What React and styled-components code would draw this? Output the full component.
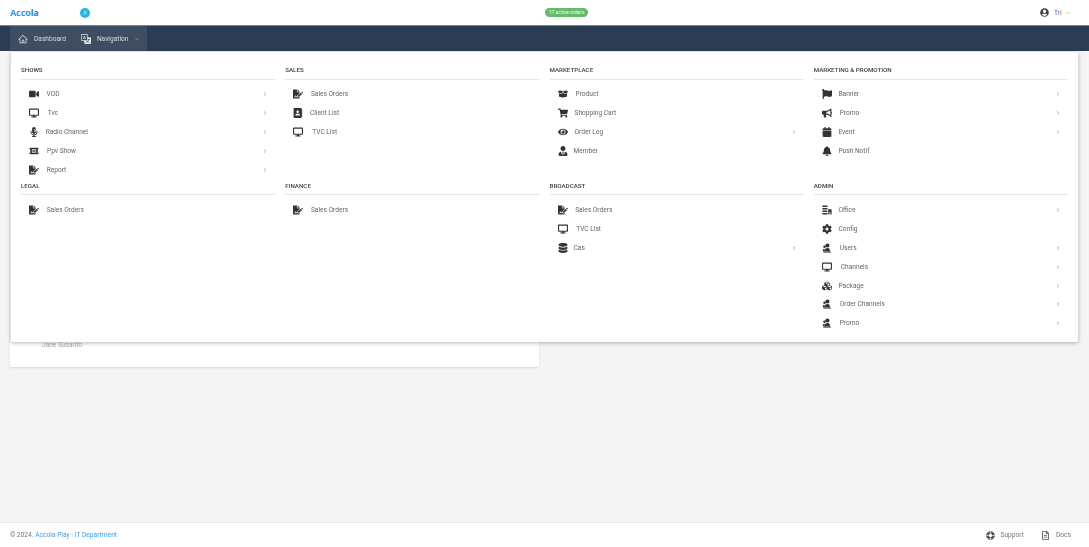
import React from "react";
import styled, { createGlobalStyle } from "styled-components";
import {
  FaVideo, FaDesktop, FaMicrophoneAlt, FaFileSignature, FaAddressBook,
  FaBoxOpen, FaShoppingCart, FaEye, FaUserTie, FaFlag, FaBullhorn, FaCalendar,
  FaBell, FaCog, FaCubes, FaDatabase, FaUserCircle, FaLifeRing, FaRegFileAlt,
} from "react-icons/fa";
import { AiOutlineHome } from "react-icons/ai";
import { BsTranslate } from "react-icons/bs";
import { FiChevronRight, FiChevronDown } from "react-icons/fi";

const GlobalStyle = createGlobalStyle`
  html, body { margin: 0; padding: 0; }
  body { font-family: Roboto, "Liberation Sans", sans-serif; background: #f4f4f4; }
`;

const Page = styled.div`
  min-height: 100vh;
  display: flex;
  flex-direction: column;
  will-change: opacity;
`;

const Header = styled.header`
  height: 25px;
  background: #fff;
  display: grid;
  grid-template-columns: 535px auto 1fr;
  align-items: center;
  padding-left: 10px;
  padding-right: 18px;
`;
const Brand = styled.div`
  display: flex;
  align-items: center;
`;
const Logo = styled.div`
  width: 70px;
  font-family: "Open Sans", sans-serif;
  font-size: 9px;
  font-weight: 700;
  color: #2f97df;
  line-height: 11px;
  letter-spacing: -0.1px;
  span { color: #1f86b0; }
`;
const RoundBadge = styled.div`
  width: 10px;
  height: 10px;
  border-radius: 50%;
  background: #29b6e0;
  color: #cdeef8;
  font-size: 5px;
  display: flex;
  align-items: center;
  justify-content: center;
`;
const OrdersPill = styled.div`
  width: 43px;
  height: 9px;
  border-radius: 5px;
  background: #66bb6a;
  color: #eefaef;
  font-size: 5px;
  line-height: 9px;
  text-align: center;
  white-space: nowrap;
`;
const UserBox = styled.div`
  justify-self: end;
  display: flex;
  align-items: center;
  color: #666;
  font-size: 6.5px;
  svg:first-child { font-size: 9px; color: #444; margin-right: 5.5px; }
  svg:last-child { font-size: 6px; color: #888; margin-left: 3.5px; }
`;

const NavWrap = styled.div`
  position: relative;
  z-index: 2;
`;
const NavBar = styled.nav`
  height: 25px;
  border-top: 1px solid #76828f;
  background: #2b3c53;
  padding-left: 10px;
  display: flex;
`;
const NavGroup = styled.div`
  background: #3e4d62;
  width: 137px;
  display: flex;
  align-items: center;
  padding-left: 8px;
  box-sizing: border-box;
`;
const NavLink = styled.div`
  display: flex;
  align-items: center;
  gap: 6px;
  color: #d8dce1;
  font-size: 6.6px;
  margin-right: ${(p) => p.$after || 0}px;
  svg { font-size: 10px; color: #e4e7ea; }
`;
const NavCaret = styled(FiChevronDown)`
  && { font-size: 6px; color: #aab2bc; }
`;

const MegaMenu = styled.div`
  position: absolute;
  top: 27px;
  left: 11px;
  width: 1067px;
  box-sizing: border-box;
  background: #fff;
  border-radius: 2px;
  box-shadow: 0 1px 4px rgba(0, 0, 0, 0.3);
  padding: 13px 10px 9.4px;
  display: grid;
  grid-template-columns: repeat(4, 1fr);
  column-gap: 10px;
  row-gap: 2px;
`;
const Section = styled.section`
  min-width: 0;
`;
const SectionTitle = styled.h4`
  margin: 0;
  height: 13.5px;
  line-height: 10px;
  font-size: 6.2px;
  font-weight: 500;
  color: #3a3f45;
  text-transform: uppercase;
  border-bottom: 1px solid #e6e6e6;
`;
const ItemList = styled.ul`
  list-style: none;
  margin: 5.5px 0 0;
  padding: 0;
`;
const Item = styled.li`
  height: 18.8px;
  display: flex;
  align-items: center;
  padding: 0 7px 0 8px;
  font-size: 6.6px;
  color: #666;
`;
const IconSlot = styled.span`
  width: ${(p) => p.$w}px;
  margin-right: 7px;
  display: flex;
  align-items: center;
  flex: none;
  color: #333;
  font-size: 10px;
  svg { flex: none; }
`;
const ItemLabel = styled.span`
  flex: 1;
`;
const ItemArrow = styled(FiChevronRight)`
  font-size: 6px;
  color: #666;
`;

const Main = styled.main`
  flex: 1;
  padding: 10px;
`;
const Card = styled.div`
  width: 529px;
  height: 306px;
  box-sizing: border-box;
  background: #fff;
  border-radius: 2px;
  box-shadow: 0 1px 2px rgba(0, 0, 0, 0.12);
  padding: 0 0 18px 32px;
  display: flex;
  align-items: flex-end;
  color: #aaa;
  font-size: 6.6px;
`;

const Footer = styled.footer`
  height: 25px;
  box-sizing: border-box;
  background: #fff;
  border-top: 1px solid #e6e6e6;
  display: flex;
  align-items: center;
  justify-content: space-between;
  padding: 0 18px 0 10px;
  font-size: 6.65px;
  color: #777;
`;
const Copy = styled.div`
  a { color: #3f9fe0; text-decoration: none; }
`;
const FooterLinks = styled.div`
  display: flex;
  gap: 17px;
`;
const FooterLink = styled.div`
  display: flex;
  align-items: center;
  gap: 6px;
  svg { font-size: 9px; color: #555; }
`;
const SupportIcon = styled(FaLifeRing)`
  transform: rotate(45deg);
`;

// no package icon looks like these three, so they are drawn
const PpvIcon = () => (
  <svg width="1em" height="1em" viewBox="0 0 24 24" fill="currentColor">
    <path d="M1 5h3v3H1zM1 16h3v3H1zM20 5h3v3h-3zM20 16h3v3h-3z" />
    <path fillRule="evenodd" d="M3 4h18v16H3zM7 8v8h10V8z" />
    <path d="M8 9h8v6H8z" opacity="0.7" />
  </svg>
);
const OfficeIcon = () => (
  <svg width="1em" height="1em" viewBox="0 0 24 24" fill="currentColor">
    <path d="M1 1h12v4H1zM1 7h12v4H1zM1 13h12v4H1zM1 19h12v4H1z" />
    <path d="M15 10h8v13h-3v-6h-2v6h-3z" />
  </svg>
);
const StaffIcon = () => (
  <svg width="1em" height="1em" viewBox="0 0 24 24" fill="currentColor">
    <circle cx="13" cy="6" r="5" />
    <path d="M7 19c0-4 1-7 6-7s6 3 6 7z" />
    <circle cx="6" cy="9" r="3" />
    <path d="M2 19c0-3 1-5 4-5l1 5z" />
    <path d="M3 20h18v3H3z" />
  </svg>
);

const menu = [
  ["Shows", [
    [FaVideo, "VOD", 10.5, true], [FaDesktop, "Tvc", 11.7, true],
    [FaMicrophoneAlt, "Radio Channel", 9.7, true], [PpvIcon, "Ppv Show", 11, true],
    [FaFileSignature, "Report", 10.7, true],
  ]],
  ["Sales", [
    [FaFileSignature, "Sales Orders", 10.7], [FaAddressBook, "Client List", 9.7], [FaDesktop, "TVC List", 12],
  ]],
  ["Marketplace", [
    [FaBoxOpen, "Product", 11], [FaShoppingCart, "Shopping Cart", 10],
    [FaEye, "Order Log", 10, true], [FaUserTie, "Member", 9],
  ]],
  ["Marketing & Promotion", [
    [FaFlag, "Banner", 9.7, true], [FaBullhorn, "Promo", 11, true],
    [FaCalendar, "Event", 9.7, true], [FaBell, "Push Notif", 9.7],
  ]],
  ["Legal", [[FaFileSignature, "Sales Orders", 10.7]]],
  ["Finance", [[FaFileSignature, "Sales Orders", 10.7]]],
  ["Broadcast", [
    [FaFileSignature, "Sales Orders", 10.7], [FaDesktop, "TVC List", 11.7], [FaDatabase, "Cas", 9, true],
  ]],
  ["Admin", [
    [OfficeIcon, "Office", 9.7, true], [FaCog, "Config", 9.7], [StaffIcon, "Users", 11, true],
    [FaDesktop, "Channels", 12, true], [FaCubes, "Package", 9.7, true],
    [StaffIcon, "Order Channels", 11, true], [StaffIcon, "Promo", 11, true],
  ]],
];

export default function App() {
  return (
    <Page>
      <GlobalStyle />
      <Header>
        <Brand>
          <Logo>Acco<span>la</span></Logo>
          <RoundBadge>P</RoundBadge>
        </Brand>
        <OrdersPill>17 active orders</OrdersPill>
        <UserBox>
          <FaUserCircle />
          Tri
          <FiChevronDown />
        </UserBox>
      </Header>
      <NavWrap>
        <NavBar>
          <NavGroup>
            <NavLink $after={15}><AiOutlineHome />Dashboard</NavLink>
            <NavLink><BsTranslate />Navigation<NavCaret /></NavLink>
          </NavGroup>
        </NavBar>
        <MegaMenu>
          {menu.map(([title, items]) => (
            <Section key={title}>
              <SectionTitle>{title}</SectionTitle>
              <ItemList>
                {items.map(([Icon, label, w, more]) => (
                  <Item key={label}>
                    <IconSlot $w={w}><Icon /></IconSlot>
                    <ItemLabel>{label}</ItemLabel>
                    {more && <ItemArrow />}
                  </Item>
                ))}
              </ItemList>
            </Section>
          ))}
        </MegaMenu>
      </NavWrap>
      <Main>
        <Card>Jane Susanto</Card>
      </Main>
      <Footer>
        <Copy>© 2024. <a href="#">Accola Play - IT Department</a></Copy>
        <FooterLinks>
          <FooterLink><SupportIcon />Support</FooterLink>
          <FooterLink><FaRegFileAlt />Docs</FooterLink>
        </FooterLinks>
      </Footer>
    </Page>
  );
}
